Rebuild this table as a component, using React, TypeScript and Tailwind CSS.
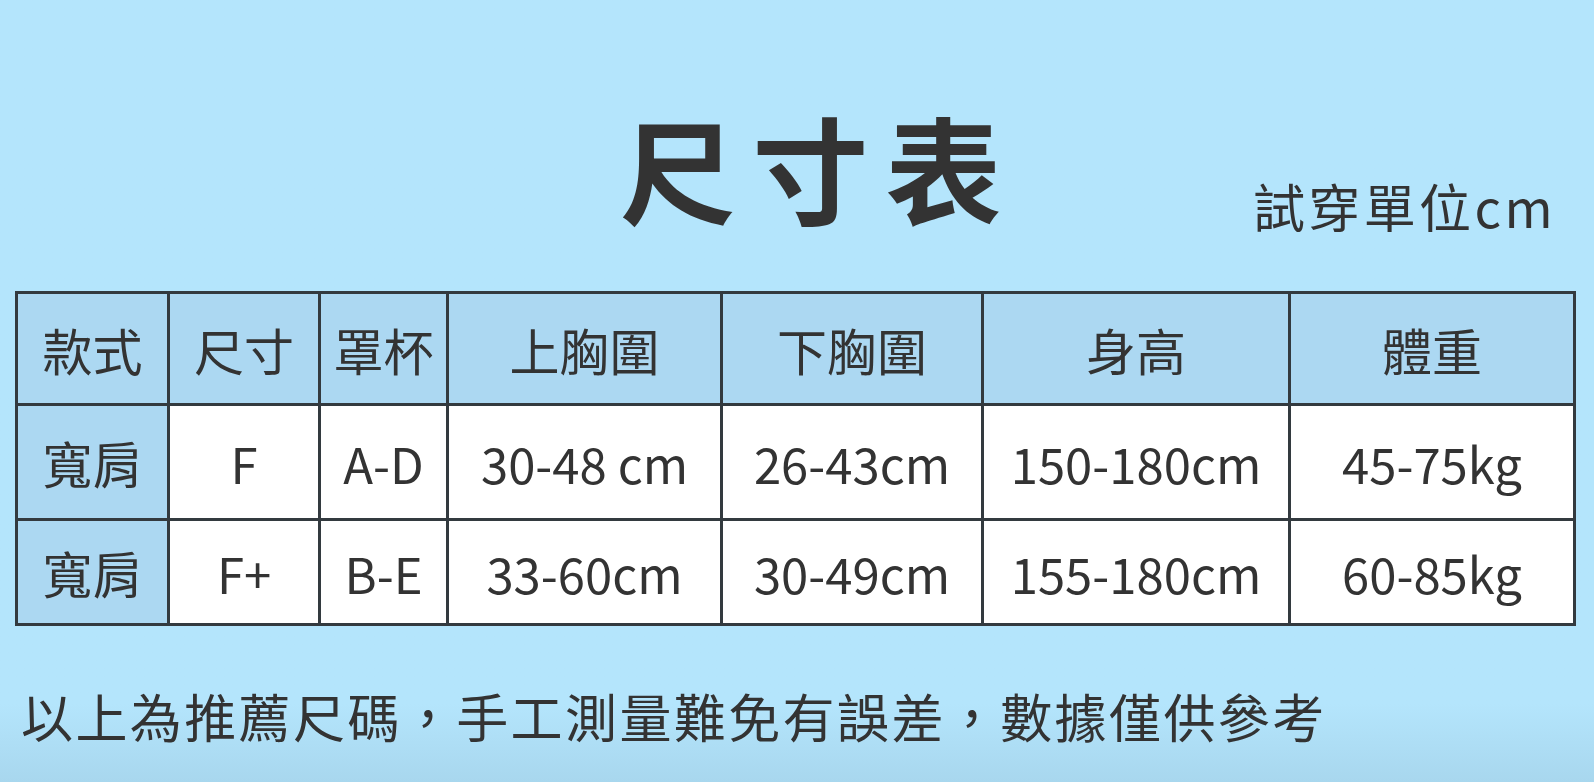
const font = { fontFamily: '"Noto Sans CJK TC", "Noto Sans", sans-serif' };

const header = ["款式", "尺寸", "罩杯", "上胸圍", "下胸圍", "身高", "體重"];

const rows = [
  ["寬肩", "F", "A-D", "30-48 cm", "26-43cm", "150-180cm", "45-75kg"],
  ["寬肩", "F+", "B-E", "33-60cm", "30-49cm", "155-180cm", "60-85kg"],
];

const widths = [152, 151, 128, 274, 261, 307, 285];

const SizeChart = () => {
  return (
    <div
      className="flex h-[782px] w-full flex-col bg-gradient-to-b from-[#b4e5fc] from-90% to-[#a8d7ee] text-[#333333]"
      style={font}
    >
      <div className="grid grid-cols-[1fr_auto_1fr] items-end pt-[107px]">
        <div />
        <h1 className="ml-[44px] text-[116px] font-bold leading-none tracking-[17px]">尺寸表</h1>
        <p className="mb-[-9px] justify-self-end pr-[38px] text-[52px] leading-none tracking-[3.4px]">
          試穿單位cm
        </p>
      </div>

      <table className="ml-[15px] mt-[68px] w-[1558px] table-fixed border-collapse">
        <colgroup>
          {widths.map((w, i) => (
            <col key={i} style={{ width: w }} />
          ))}
        </colgroup>
        <thead>
          <tr className="h-[112px] bg-[#acd8f2]">
            {header.map((h) => (
              <th key={h} className="border-[3px] border-[#333a3f] text-[50px] font-normal leading-none">
                {h}
              </th>
            ))}
          </tr>
        </thead>
        <tbody>
          {rows.map((r, ri) => (
            <tr key={ri} className={ri === 0 ? "h-[115px]" : "h-[105px]"}>
              {r.map((c, ci) => (
                <td
                  key={ci}
                  className={
                    ci === 0
                      ? "border-[3px] border-[#333a3f] bg-[#acd8f2] text-center text-[50px] leading-none"
                      : "border-[3px] border-[#333a3f] bg-white text-center text-[49px] leading-none"
                  }
                >
                  {c}
                </td>
              ))}
            </tr>
          ))}
        </tbody>
      </table>

      <p className="ml-[21px] mt-[64px] text-[52px] font-normal leading-none tracking-[2.4px]">
        以上為推薦尺碼，手工測量難免有誤差，數據僅供參考
      </p>
    </div>
  );
};

export default function App() {
  return <SizeChart />;
}
